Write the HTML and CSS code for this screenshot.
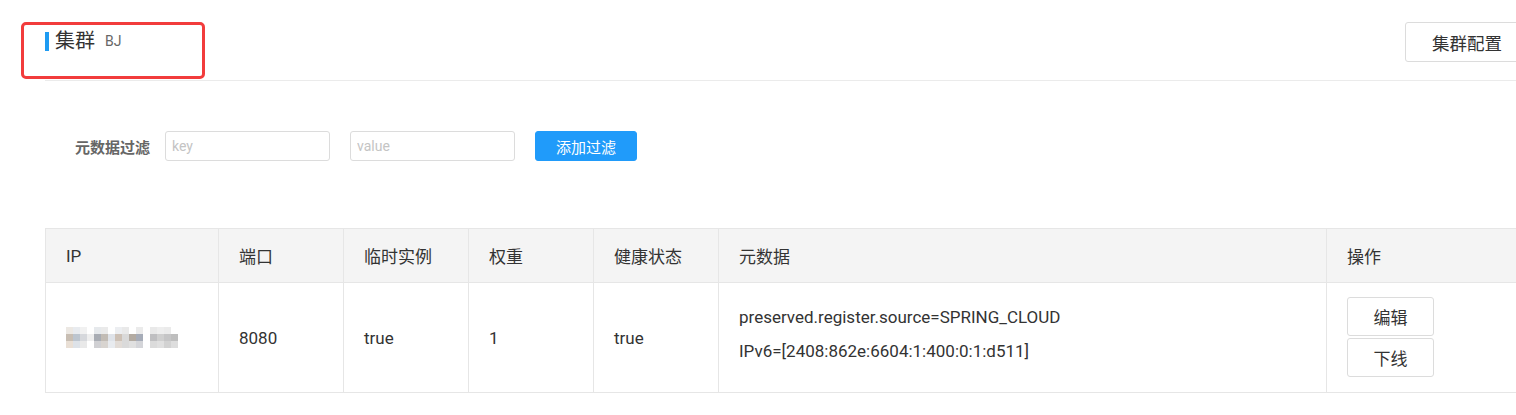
FILE: index.html
```html
<!DOCTYPE html>
<html lang="zh-CN">
<head>
<meta charset="utf-8">
<title>集群</title>
<link rel="stylesheet" href="styles.css">
</head>
<body>
<div class="page">
  <div class="header">
    <div class="title">
      <span class="bar"></span>
      <span class="name">集群</span>
      <span class="sub">BJ</span>
    </div>
    <button class="btn cfg">集群配置</button>
    <div class="highlight"></div>
  </div>

  <div class="filter">
    <span class="label">元数据过滤</span>
    <input class="inp" placeholder="key">
    <input class="inp" placeholder="value">
    <button class="btn primary">添加过滤</button>
  </div>

  <table class="grid">
    <colgroup>
      <col class="c-ip"><col class="c-port"><col class="c-tmp"><col class="c-w"><col class="c-h"><col class="c-meta"><col class="c-op">
    </colgroup>
    <thead>
      <tr><th>IP</th><th>端口</th><th>临时实例</th><th>权重</th><th>健康状态</th><th>元数据</th><th>操作</th></tr>
    </thead>
    <tbody>
      <tr>
        <td>
          <svg class="mosaic" width="112" height="21" viewBox="0 0 112 21">
            <g>
              <rect x="0" y="0" width="7" height="7" fill="#ece8e3"/><rect x="7" y="0" width="7" height="7" fill="#e8ebef"/><rect x="14" y="0" width="7" height="7" fill="#f1f1f1"/><rect x="28" y="0" width="7" height="7" fill="#e6e9ec"/><rect x="35" y="0" width="7" height="7" fill="#eaeaea"/><rect x="49" y="0" width="7" height="7" fill="#eceef1"/><rect x="56" y="0" width="7" height="7" fill="#e9e9e9"/><rect x="70" y="0" width="7" height="7" fill="#ebebeb"/><rect x="84" y="0" width="7" height="7" fill="#e9e9e9"/><rect x="91" y="0" width="7" height="7" fill="#eeeeee"/><rect x="98" y="0" width="7" height="7" fill="#ebebeb"/>
              <rect x="0" y="7" width="7" height="7" fill="#c8beb3"/><rect x="7" y="7" width="7" height="7" fill="#bcc5cf"/><rect x="14" y="7" width="7" height="7" fill="#d6d8dc"/><rect x="21" y="7" width="7" height="7" fill="#eeeeee"/><rect x="28" y="7" width="7" height="7" fill="#a9adb4"/><rect x="35" y="7" width="7" height="7" fill="#c2bcb5"/><rect x="42" y="7" width="7" height="7" fill="#dfe3e9"/><rect x="49" y="7" width="7" height="7" fill="#cdc1b6"/><rect x="56" y="7" width="7" height="7" fill="#d9d9d9"/><rect x="63" y="7" width="7" height="7" fill="#b3aba2"/><rect x="70" y="7" width="7" height="7" fill="#a6acb8"/><rect x="84" y="7" width="7" height="7" fill="#bfbfc1"/><rect x="91" y="7" width="7" height="7" fill="#cfcfcf"/><rect x="98" y="7" width="7" height="7" fill="#c5c5c6"/><rect x="105" y="7" width="7" height="7" fill="#bebebe"/>
              <rect x="0" y="14" width="7" height="7" fill="#e9dfd5"/><rect x="7" y="14" width="7" height="7" fill="#dde2e8"/><rect x="14" y="14" width="7" height="7" fill="#e9e9e9"/><rect x="28" y="14" width="7" height="7" fill="#d0d0d3"/><rect x="35" y="14" width="7" height="7" fill="#d8d4d0"/><rect x="42" y="14" width="7" height="7" fill="#e8ebef"/><rect x="49" y="14" width="7" height="7" fill="#e2dcd7"/><rect x="56" y="14" width="7" height="7" fill="#dadada"/><rect x="63" y="14" width="7" height="7" fill="#e0e0e0"/><rect x="70" y="14" width="7" height="7" fill="#d4d5d9"/><rect x="84" y="14" width="7" height="7" fill="#dbdbdb"/><rect x="91" y="14" width="7" height="7" fill="#e0e0e0"/><rect x="98" y="14" width="7" height="7" fill="#d2d2d2"/><rect x="105" y="14" width="7" height="7" fill="#dddddd"/>
            </g>
          </svg>
        </td>
        <td>8080</td>
        <td>true</td>
        <td>1</td>
        <td>true</td>
        <td class="meta">
          <div>preserved.register.source=SPRING_CLOUD</div>
          <div>IPv6=[2408:862e:6604:1:400:0:1:d511]</div>
        </td>
        <td class="ops">
          <button class="btn op">编辑</button>
          <button class="btn op">下线</button>
        </td>
      </tr>
    </tbody>
  </table>
</div>
</body>
</html>
```

FILE: styles.css
```css
* { box-sizing: border-box; }
html, body { margin: 0; padding: 0; background: #fff; }
body {
  font-family: Roboto, "Noto Sans CJK SC", sans-serif;
  color: #333;
  overflow: hidden;
  width: 1516px;
}
.page {
  padding-left: 45px;
  width: 1600px;
}
.header {
  position: relative;
  display: flex;
  align-items: flex-start;
  justify-content: space-between;
  height: 81px;
  border-bottom: 1px solid #ebebeb;
  padding-right: 71px;
}
.title {
  display: flex;
  align-items: center;
  margin-top: 30px;
  height: 22px;
}
.bar {
  width: 4px;
  height: 19px;
  background: #1e9bf2;
  margin-right: 6px;
}
.name {
  font-size: 20px;
  color: #333;
  line-height: 22px;
}
.sub {
  font-size: 14px;
  color: #666;
  margin-left: 10px;
  line-height: 22px;
}
.highlight {
  position: absolute;
  left: -24px;
  top: 22px;
  width: 184px;
  height: 57px;
  border: 3px solid #f23c3c;
  border-radius: 5px;
}
.btn {
  font-family: Roboto, "Noto Sans CJK SC", sans-serif;
  background: #fff;
  border: 1px solid #dcdcdc;
  border-radius: 3px;
  color: #333;
  cursor: pointer;
}
.cfg {
  margin-top: 22px;
  height: 40px;
  width: 124px;
  font-size: 17.5px;
  padding: 0;
}
.filter {
  display: flex;
  align-items: center;
  height: 30px;
  margin-top: 50px;
  padding-left: 30px;
}
.label {
  font-size: 15px;
  font-weight: bold;
  color: #666;
  margin-right: 15px;
}
.inp {
  width: 165px;
  height: 30px;
  border: 1px solid #dcdcdc;
  border-radius: 3px;
  font-family: Roboto, sans-serif;
  font-size: 14px;
  padding: 0 6px;
  margin-right: 20px;
  color: #333;
  outline: none;
}
.inp::placeholder { color: #c4c4c4; }
.primary {
  width: 102px;
  height: 30px;
  background: #209bfa;
  border-color: #209bfa;
  color: #fff;
  font-size: 15px;
}
.grid {
  margin-top: 67px;
  border-collapse: collapse;
  table-layout: fixed;
  width: 1600px;
}
.c-ip { width: 173px; }
.c-port, .c-tmp, .c-w, .c-h { width: 125px; }
.c-meta { width: 608px; }
.c-op { width: 319px; }
th, td {
  border: 1px solid #e6e6e6;
  text-align: left;
  padding: 0 0 0 20px;
  font-size: 17px;
  font-weight: normal;
  color: #333;
}
th {
  background: #f4f4f4;
  height: 54px;
}
td { height: 110px; }
.mosaic { display: block; margin-top: 0; }
.meta { line-height: 34px; padding-bottom: 8px; font-size: 17px; }
.ops { padding-left: 20px; }
.op {
  display: block;
  width: 87px;
  height: 39px;
  font-size: 17px;
  margin: 0 0 2px 0;
}
```
